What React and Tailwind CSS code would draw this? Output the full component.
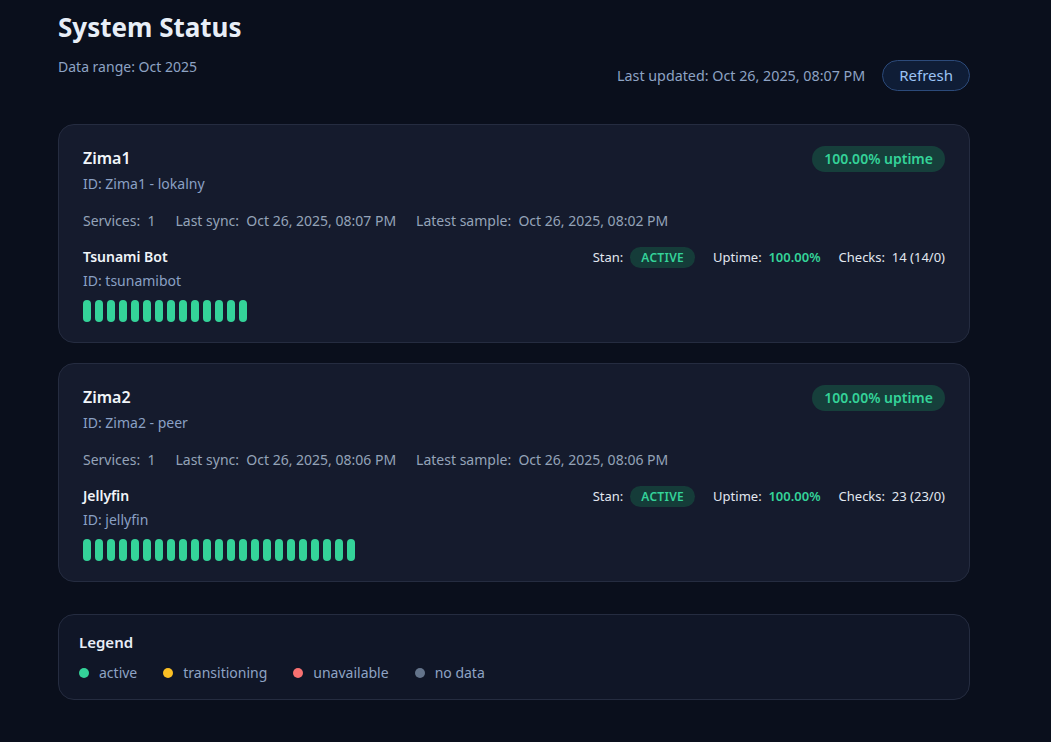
const hosts = [
  {
    name: 'Zima1',
    id: 'Zima1 - lokalny',
    services: 1,
    lastSync: 'Oct 26, 2025, 08:07 PM',
    latest: 'Oct 26, 2025, 08:02 PM',
    service: { name: 'Tsunami Bot', id: 'tsunamibot', checks: '14 (14/0)', bars: 14 },
  },
  {
    name: 'Zima2',
    id: 'Zima2 - peer',
    services: 1,
    lastSync: 'Oct 26, 2025, 08:06 PM',
    latest: 'Oct 26, 2025, 08:06 PM',
    service: { name: 'Jellyfin', id: 'jellyfin', checks: '23 (23/0)', bars: 23 },
  },
];

const legend = [
  { label: 'active', color: 'bg-[#34d399]' },
  { label: 'transitioning', color: 'bg-[#fbbf24]' },
  { label: 'unavailable', color: 'bg-[#f87171]' },
  { label: 'no data', color: 'bg-[#64748b]' },
];

const HostCard = ({ host }) => {
  const s = host.service;
  return (
    <section className="rounded-2xl border border-[#252c40] bg-[#151b2d] px-6 pt-[21px] pb-5">
      <div className="flex items-start justify-between">
        <div>
          <h2 className="text-base font-semibold leading-6 text-[#f1f5f9]">{host.name}</h2>
          <p className="mt-1 text-sm leading-5 text-[#8aa0c4]">ID: {host.id}</p>
        </div>
        <span className="rounded-full bg-[#163f3b] px-3 py-[3px] text-sm font-semibold leading-5 text-[#34d399]">
          100.00% uptime
        </span>
      </div>

      <div className="mt-[17px] flex gap-5 text-sm leading-5 text-[#94a3b8]">
        <span>Services:&nbsp; {host.services}</span>
        <span>Last sync:&nbsp; {host.lastSync}</span>
        <span>Latest sample:&nbsp; {host.latest}</span>
      </div>

      <div className="mt-4 flex items-start justify-between">
        <div>
          <h3 className="text-sm font-semibold leading-5 text-[#f1f5f9]">{s.name}</h3>
          <p className="mt-1 text-sm leading-5 text-[#8aa0c4]">ID: {s.id}</p>
        </div>
        <div className="flex items-center gap-[18px] text-[13px] text-[#e2e8f0]">
          <span className="flex items-center gap-[7px]">
            Stan:
            <span className="rounded-full bg-[#153c39] px-[11px] py-[2px] text-xs font-semibold leading-[17px] tracking-wide text-[#34d399]">
              ACTIVE
            </span>
          </span>
          <span>
            Uptime:&nbsp; <span className="font-semibold text-[#34d399]">100.00%</span>
          </span>
          <span>Checks:&nbsp; {s.checks}</span>
        </div>
      </div>

      <div className="mt-[9px] flex gap-1">
        {Array.from({ length: s.bars }).map((_, i) => (
          <span key={i} className="h-[22px] w-2 rounded-full bg-[#34d399]" />
        ))}
      </div>
    </section>
  );
};

export default function App() {
  return (
    <div
      className="min-h-screen bg-[#0a0f1c] pb-10"
      style={{ fontFamily: '"Segoe UI", "Noto Sans", "Open Sans", sans-serif' }}
    >
      <div className="ml-[58px] w-[912px] pt-[11px]">
        <header className="flex items-end justify-between">
          <div className="pb-[14px]">
            <h1 className="text-[26px] font-bold leading-8 text-[#e8eef7]">System Status</h1>
            <p className="mt-[14px] text-sm leading-5 text-[#8ea3c4]">Data range: Oct 2025</p>
          </div>
          <div className="flex items-center gap-[17px]">
            <span className="text-[14.3px] text-[#8ea3c4]">Last updated: Oct 26, 2025, 08:07 PM</span>
            <button
              type="button"
              className="h-[31px] rounded-full border border-[#2c4a7a] bg-[#0f1d36] px-[16px] text-[15px] text-[#9cc3f5]"
            >
              Refresh
            </button>
          </div>
        </header>

        <div className="mt-[33px] flex flex-col gap-5">
          {hosts.map((h) => (
            <HostCard key={h.name} host={h} />
          ))}
        </div>

        <section className="mt-8 rounded-2xl border border-[#252c40] bg-[#101627] px-5 pt-[17px] pb-4">
          <h2 className="text-[15px] font-semibold leading-5 text-[#e8eef7]">Legend</h2>
          <div className="mt-[11px] flex items-center gap-[26px] text-sm leading-5 text-[#8ea3c4]">
            {legend.map((l) => (
              <span key={l.label} className="flex items-center gap-[10px]">
                <span className={`h-2.5 w-2.5 rounded-full ${l.color}`} />
                {l.label}
              </span>
            ))}
          </div>
        </section>
      </div>
    </div>
  );
}
